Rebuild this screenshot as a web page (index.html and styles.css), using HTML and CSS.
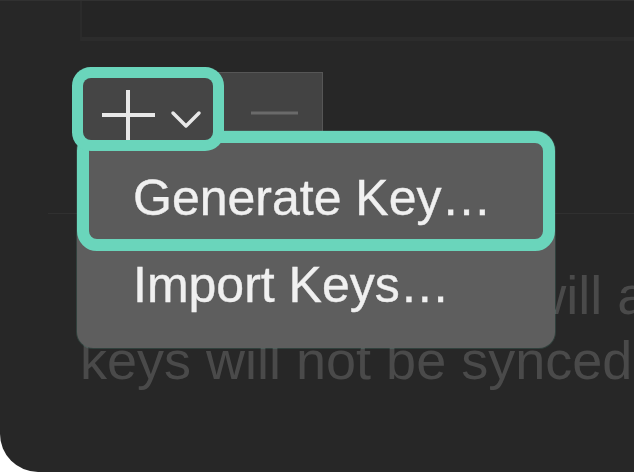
FILE: index.html
```html
<!DOCTYPE html>
<html>
  <head>
    <meta charset="utf-8">
    <link rel="stylesheet" href="styles.css">
  </head>
  <body>
    <div class="window">
      <div class="topbar"></div>
      <div class="segmented">
        <div class="seg-add">
          <svg width="130" height="62" viewBox="0 0 130 62">
            <path d="M19 37 H72 M45 12 V64" stroke="#e8e8e8" stroke-width="4" fill="none"/>
            <path d="M90 35 L103 48 L116 35" stroke="#e8e8e8" stroke-width="3.5" fill="none" stroke-linecap="round" stroke-linejoin="round"/>
          </svg>
        </div>
        <div class="seg-remove">
          <svg width="108" height="58" viewBox="0 0 108 58">
            <path d="M37 40 H84" stroke="#6a6a6a" stroke-width="3" fill="none"/>
          </svg>
        </div>
      </div>
      <div class="separator"></div>
      <p class="note">Keys you manage will also be stored in your keychain.<br>keys will not be synced to other devices.</p>

      <ul class="menu">
        <li class="menu-item selected">Generate Key…</li>
        <li class="menu-item">Import Keys…</li>
      </ul>
    </div>
  </body>
</html>
```

FILE: styles.css
```css
body {
  margin: 0;
  padding: 0;
  background: #fff;
  font-family: "Liberation Sans", Arial, sans-serif;
}
.window {
  position: relative;
  height: 100vh;
  display: flex;
  flex-direction: column;
  background: #272727;
  border-top: 1px solid #313131;
  box-sizing: border-box;
  border-bottom-left-radius: 38px;
  overflow: hidden;
}
.topbar {
  margin-left: 80px;
  height: 36px;
  background: #252525;
  border-left: 2px solid #2b2b2b;
  border-bottom: 4px solid #2c2c2c;
  flex: none;
}
.segmented {
  display: flex;
  align-items: flex-start;
  margin-top: 31px;
  margin-left: 83px;
  flex: none;
}
.seg-add {
  position: relative;
  z-index: 1;
  width: 130px;
  height: 62px;
  margin-top: 6px;
  background: #454545;
  border-radius: 8px;
  box-shadow: 0 0 0 11px #6ad5bb;
}
.seg-add svg,
.seg-remove svg {
  display: block;
}
.seg-remove {
  width: 108px;
  height: 58px;
  background: #434343;
  border: 1px solid #565656;
}
.separator {
  flex: none;
  height: 1px;
  margin-top: 73px;
  margin-left: 48px;
  background: #303030;
}
.note {
  margin: 49px 0 0 0;
  padding-left: 80px;
  font-size: 54px;
  line-height: 65px;
  color: #4a4a4a;
  white-space: nowrap;
}
.menu {
  position: absolute;
  left: 77px;
  top: 130px;
  width: 478px;
  height: 217px;
  margin: 0;
  padding: 0;
  list-style: none;
  background: #5e5e5e;
  border-radius: 20px 20px 16px 16px;
  box-shadow: 0 0 0 1px rgba(106, 213, 187, 0.15);
}
.menu-item {
  font-size: 50px;
  color: #f0f0f0;
  padding-left: 56px;
  line-height: 69px;
  -webkit-text-stroke: 0.4px #f0f0f0;
}
.menu-item.selected {
  padding: 14px 0 0 44px;
  line-height: 82px;
  box-sizing: content-box;
  height: 82px;
  background: #5b5b5b;
  border: 12px solid #6ad5bb;
  border-radius: 20px;
}
```
